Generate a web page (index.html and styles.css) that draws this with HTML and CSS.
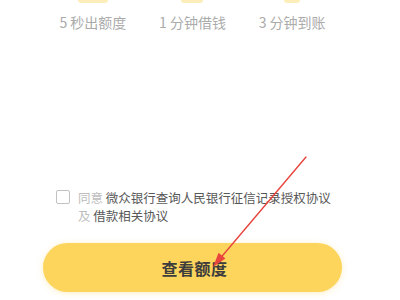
FILE: index.html
```html
<!DOCTYPE html>
<html lang="zh-CN">
<head>
<meta charset="utf-8">
<title>查看额度</title>
<link rel="stylesheet" href="styles.css">
</head>
<body>
<div class="page">
  <ul class="features">
    <li class="feature"><span class="icon-tail wide"></span><span class="label">5 秒出额度</span></li>
    <li class="feature"><span class="icon-tail"></span><span class="label">1 分钟借钱</span></li>
    <li class="feature"><span class="icon-tail narrow"></span><span class="label">3 分钟到账</span></li>
  </ul>
  <div class="agree">
    <span class="checkbox"></span>
    <p class="agree-text"><span class="muted">同意</span> 微众银行查询人民银行征信记录授权协议 <span class="muted">及</span> 借款相关协议</p>
  </div>
  <button class="cta">查看额度</button>
</div>
<svg class="arrow" width="400" height="300" viewBox="0 0 400 300">
  <line x1="306" y1="157" x2="218" y2="261" stroke="#e8453c" stroke-width="1.4" stroke-linecap="round"/>
  <polygon points="213,267 225.5,258.6 218.6,252.8" fill="#e8453c"/>
</svg>
</body>
</html>
```
FILE: styles.css
```css
html, body {
  margin: 0;
  padding: 0;
  background: #ffffff;
  width: 400px;
  height: 300px;
  overflow: hidden;
  font-family: "Noto Sans CJK SC", "Noto Sans", sans-serif;
}
.page {
  width: 299px;
  margin-left: 43px;
  display: flex;
  flex-direction: column;
}
.features {
  list-style: none;
  margin: 0;
  padding: 0;
  display: grid;
  grid-template-columns: repeat(3, 1fr);
}
.feature {
  display: flex;
  flex-direction: column;
  align-items: center;
}
.icon-tail {
  display: block;
  width: 22px;
  height: 3px;
  background: #fbe9a8;
  border-radius: 0 0 10px 10px;
  opacity: 0.8;
}
.icon-tail.wide { width: 30px; }
.icon-tail.narrow { width: 16px; }
.label {
  margin-top: 9px;
  font-size: 14px;
  line-height: 20px;
  color: #ababab;
  white-space: nowrap;
}
.agree {
  margin-top: 157px;
  display: flex;
  align-items: flex-start;
  gap: 8px;
  padding-left: 13px;
}
.checkbox {
  flex: none;
  width: 12px;
  height: 12px;
  margin-top: 1px;
  border: 1.5px solid #c2c2c2;
  border-radius: 2px;
}
.agree-text {
  margin: 0;
  font-size: 12.5px;
  line-height: 17.5px;
  color: #585858;
}
.muted {
  color: #bdbdbd;
}
.cta {
  margin-top: 19px;
  height: 49px;
  border: none;
  border-radius: 25px;
  background: #fdd55c;
  box-shadow: 0 1px 6px rgba(250, 205, 80, 0.35);
  font-family: "Noto Sans CJK SC", "Noto Sans", sans-serif;
  font-size: 16px;
  font-weight: 700;
  color: #3d3d3d;
  letter-spacing: 0.5px;
  padding: 0 0 0 4px;
}
.arrow {
  position: absolute;
  left: 0;
  top: 0;
  pointer-events: none;
}
```
